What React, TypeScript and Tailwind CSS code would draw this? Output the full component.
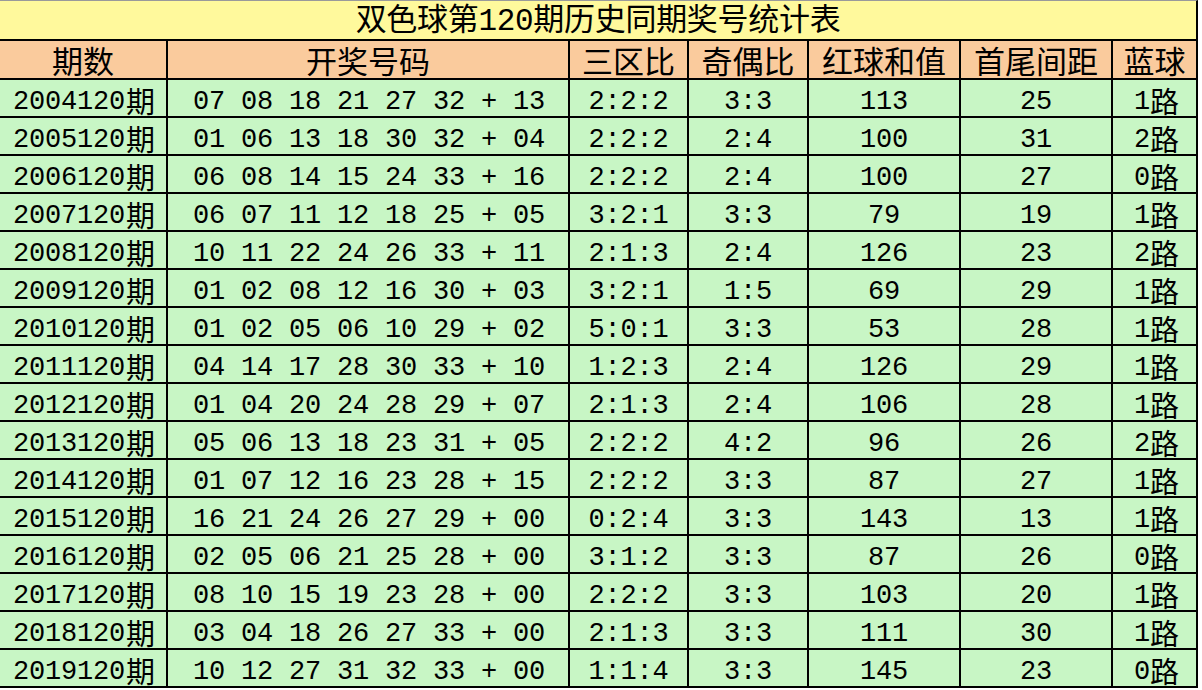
import React from "react";

interface DrawRow {
    period: string;
    reds: string[];
    blue: string;
    zone: string;
    oddEven: string;
    sum: string;
    span: string;
    road: string;
}

const rows: DrawRow[] = [
    { period: "2004120", reds: ["07", "08", "18", "21", "27", "32"], blue: "13", zone: "2:2:2", oddEven: "3:3", sum: "113", span: "25", road: "1" },
    { period: "2005120", reds: ["01", "06", "13", "18", "30", "32"], blue: "04", zone: "2:2:2", oddEven: "2:4", sum: "100", span: "31", road: "2" },
    { period: "2006120", reds: ["06", "08", "14", "15", "24", "33"], blue: "16", zone: "2:2:2", oddEven: "2:4", sum: "100", span: "27", road: "0" },
    { period: "2007120", reds: ["06", "07", "11", "12", "18", "25"], blue: "05", zone: "3:2:1", oddEven: "3:3", sum: "79", span: "19", road: "1" },
    { period: "2008120", reds: ["10", "11", "22", "24", "26", "33"], blue: "11", zone: "2:1:3", oddEven: "2:4", sum: "126", span: "23", road: "2" },
    { period: "2009120", reds: ["01", "02", "08", "12", "16", "30"], blue: "03", zone: "3:2:1", oddEven: "1:5", sum: "69", span: "29", road: "1" },
    { period: "2010120", reds: ["01", "02", "05", "06", "10", "29"], blue: "02", zone: "5:0:1", oddEven: "3:3", sum: "53", span: "28", road: "1" },
    { period: "2011120", reds: ["04", "14", "17", "28", "30", "33"], blue: "10", zone: "1:2:3", oddEven: "2:4", sum: "126", span: "29", road: "1" },
    { period: "2012120", reds: ["01", "04", "20", "24", "28", "29"], blue: "07", zone: "2:1:3", oddEven: "2:4", sum: "106", span: "28", road: "1" },
    { period: "2013120", reds: ["05", "06", "13", "18", "23", "31"], blue: "05", zone: "2:2:2", oddEven: "4:2", sum: "96", span: "26", road: "2" },
    { period: "2014120", reds: ["01", "07", "12", "16", "23", "28"], blue: "15", zone: "2:2:2", oddEven: "3:3", sum: "87", span: "27", road: "1" },
    { period: "2015120", reds: ["16", "21", "24", "26", "27", "29"], blue: "00", zone: "0:2:4", oddEven: "3:3", sum: "143", span: "13", road: "1" },
    { period: "2016120", reds: ["02", "05", "06", "21", "25", "28"], blue: "00", zone: "3:1:2", oddEven: "3:3", sum: "87", span: "26", road: "0" },
    { period: "2017120", reds: ["08", "10", "15", "19", "23", "28"], blue: "00", zone: "2:2:2", oddEven: "3:3", sum: "103", span: "20", road: "1" },
    { period: "2018120", reds: ["03", "04", "18", "26", "27", "33"], blue: "00", zone: "2:1:3", oddEven: "3:3", sum: "111", span: "30", road: "1" },
    { period: "2019120", reds: ["10", "12", "27", "31", "32", "33"], blue: "00", zone: "1:1:4", oddEven: "3:3", sum: "145", span: "23", road: "0" },
];

const headers = ["期数", "开奖号码", "三区比", "奇偶比", "红球和值", "首尾间距", "蓝球"];

const font = "font-['Liberation_Mono','Noto_Sans_CJK_SC',monospace]";
const cell = "flex items-center justify-center border-r-2 border-b-2 border-black";
const dataCell = `${cell} h-[38px] bg-[#c8f6c5] pt-[9px] text-[27px] tracking-[-0.2px] leading-none whitespace-pre`;
const cjk = "mb-[5px] font-['Noto_Sans_CJK_SC',sans-serif] text-[29px] tracking-normal";

export default function App() {
    return (
        <div className="h-[690px] w-[1202px] overflow-hidden bg-white">
            <div
                className={`grid w-[1200px] grid-cols-[168px_402px_119px_120px_152px_152px_85px] text-black ${font}`}
            >
                {/* Title */}
                <div className="col-span-7 flex h-[41px] items-center justify-center border-t border-r-2 border-b-2 border-t-[#9a9a9a] border-r-black border-b-black bg-[#fff99c] pt-[3px] text-[31px] tracking-[-0.3px] leading-none">
                    双色球第120期历史同期奖号统计表
                </div>

                {/* Header */}
                {headers.map((h) => (
                    <div
                        key={h}
                        className={`${cell} h-[39px] bg-[#facb9d] font-['Noto_Sans_CJK_SC',sans-serif] text-[31px] leading-none`}
                    >
                        {h}
                    </div>
                ))}

                {/* Data rows */}
                {rows.map((r) => (
                    <React.Fragment key={r.period}>
                        <div className={`${dataCell} pl-[2px]`}>
                            {r.period}
                            <span className={`ml-[1px] ${cjk}`}>期</span>
                        </div>
                        <div className={`${dataCell} pl-[2px]`}>{`${r.reds.join(" ")} + ${r.blue}`}</div>
                        <div className={dataCell}>{r.zone}</div>
                        <div className={dataCell}>{r.oddEven}</div>
                        <div className={dataCell}>{r.sum}</div>
                        <div className={dataCell}>{r.span}</div>
                        <div className={`${dataCell} pl-[4px]`}>
                            {r.road}
                            <span className={cjk}>路</span>
                        </div>
                    </React.Fragment>
                ))}
            </div>
        </div>
    );
}
